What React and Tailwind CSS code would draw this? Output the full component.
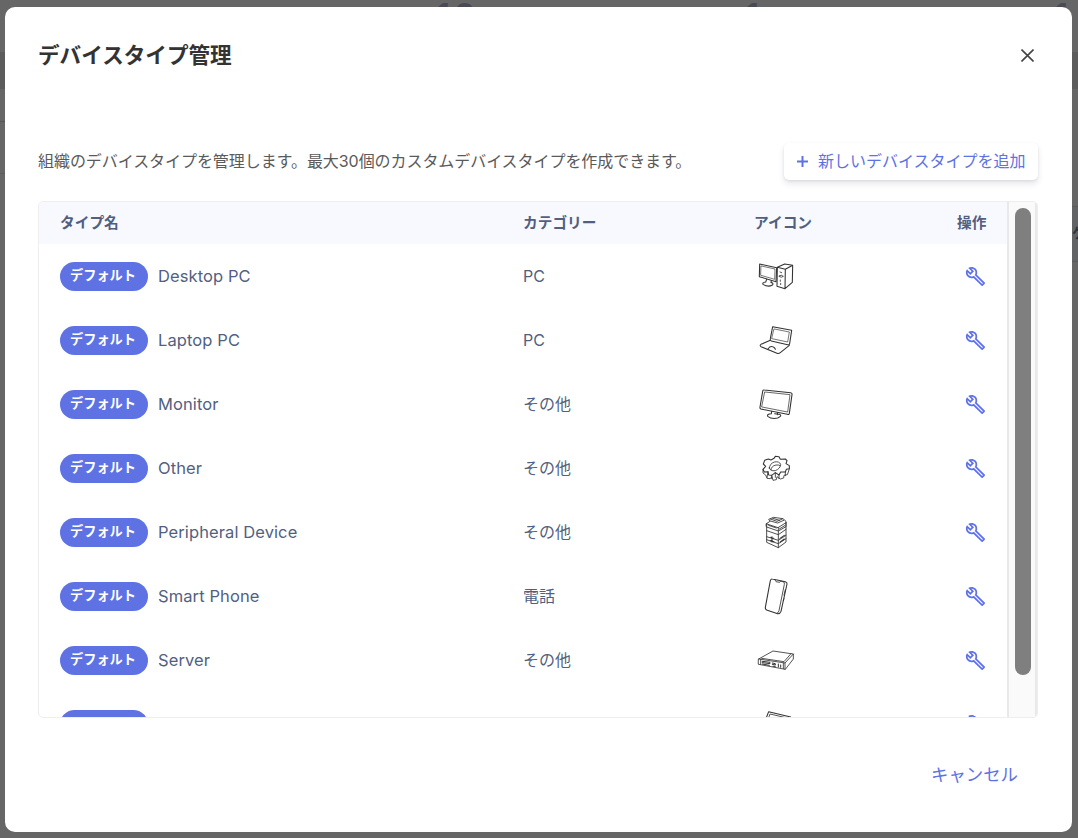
import { MdOutlineBuild } from "react-icons/md";

// -----------------------------
// ICONS
// -----------------------------
function DeviceIcon({ viewBox, children }) {
  return (
    <svg
      viewBox={viewBox}
      className="block size-10"
      fill="none"
      stroke="#333"
      strokeWidth="3.2"
      strokeLinejoin="round"
      strokeLinecap="round"
      aria-hidden
    >
      {children}
    </svg>
  );
}

const icons = {
  desktop: (
    <DeviceIcon viewBox="48 18 120 120">
      <path d="M59 42L110 53L108 95L58 80Z" />
      <path d="M64 48L105 57L104 88L63 76Z" strokeWidth="2" />
      <path d="M80 88L77 96M94 92L93 98M77 96Q66 98 69 103Q84 112 96 106Q103 101 93 97" />
      <path d="M112 52L134 42L158 46L157 97L135 116L111 109ZM112 52L136 58L135 116M136 58L158 46" />
      <path d="M118 77Q124 73 130 79Q125 84 118 80ZM120 66L125 68M121 90V94M122 100V104" strokeWidth="2.5" />
    </DeviceIcon>
  ),
  laptop: (
    <DeviceIcon viewBox="48 210 120 120">
      <path d="M98 230L155 241L149 280Q148 286 143 284L94 273Q89 271 91 266Z" />
      <path d="M103 237L148 246L143 276L96 266Z" strokeWidth="2" />
      <path d="M91 271L63 283Q58 286 63 290L111 310Q116 312 121 308L148 286" />
      <path d="M84 297L89 291Q97 287 104 294L106 298" />
    </DeviceIcon>
  ),
  monitor: (
    <DeviceIcon viewBox="48 12 120 120">
      <path d="M73 30L152 38Q157 39 156 44L148 100Q147 105 142 103L63 87Q59 86 60 81L68 34Q69 29 73 30Z" />
      <path d="M75 36L150 44L143 96L66 81Z" strokeWidth="2.2" />
      <path d="M95 94L94 101M113 98L112 104M94 101Q80 102 83 109Q95 118 113 114Q128 108 119 103L104 101" />
    </DeviceIcon>
  ),
  gear: (
    <DeviceIcon viewBox="48 204 120 120">
      <path d="M74 241L85 237L93 240L102 235L106 229L117 230L121 238L136 237L141 242L138 251L148 257L148 266L139 268L136 276L122 276L117 285L106 278L95 286L86 285L84 275L73 276L69 268L77 259L70 252Z" />
      <path d="M69 268V279L77 285L81 295L91 296L96 289L99 301L109 299L111 290L121 297L131 294L132 286L142 284L145 276L148 266M84 275L81 293M95 286V296M106 278V292M117 285V296M136 276V287" strokeWidth="2.5" />
      <path d="M88 264Q89 251 103 246Q118 243 122 253Q121 266 106 272Q90 274 88 264ZM93 269Q94 258 108 255Q118 254 121 257" strokeWidth="2.5" />
    </DeviceIcon>
  ),
  printer: (
    <DeviceIcon viewBox="48 21 120 120">
      <path d="M80 56V112L115 128L138 111V53M80 77L115 89L138 73M115 68V128M80 95L115 106L138 91M80 104L115 116L138 101" strokeWidth="2.6" />
      <path d="M79 56L90 49L86 43L101 37L129 41L138 49V65L115 78L80 66ZM81 57L114 68L138 53M91 48L113 54L131 46M91 42L111 49L127 42M98 40L119 46M86 61L109 69M118 72L134 62" strokeWidth="2.6" />
      <path d="M92 97L101 100M96 95V111M91 107L102 110M120 100L133 91M121 111L133 102" />
    </DeviceIcon>
  ),
  phone: (
    <DeviceIcon viewBox="48 213 120 120">
      <path d="M97 222L136 230Q142 232 141 237L123 319Q120 327 113 326L82 316Q75 313 76 307L91 227Q93 221 97 222Z" />
      <path d="M105 225L108 230L119 232L122 228L131 231Q134 233 133 238L117 317Q115 324 111 325" strokeWidth="2.5" />
      <path d="M136 254L132 270M132 281L130 287" strokeWidth="2.5" />
    </DeviceIcon>
  ),
  server: (
    <DeviceIcon viewBox="48 15 120 120">
      <path d="M56 72L99 48L160 57V72L136 103L56 88ZM56 72L135 84L160 57M135 84V103M62 73V88M130 84V101M65 70L132 80L153 56" strokeWidth="2.5" />
      <path d="M68 79L90 82V86L68 83ZM67 87L88 91M97 84L106 86V90L97 88M99 94H106M115 87V96M122 90V97" strokeWidth="3" />
    </DeviceIcon>
  ),
  tablet: (
    <DeviceIcon viewBox="48 207 120 120">
      <path d="M79 248L86 230L152 246L140 300L70 282Z" />
      <path d="M86 248L90 237L146 250L136 292L78 277Z" strokeWidth="2.5" />
    </DeviceIcon>
  ),
};

// -----------------------------
// DATA
// -----------------------------
const devices = [
  { name: "Desktop PC", category: "PC", icon: "desktop" },
  { name: "Laptop PC", category: "PC", icon: "laptop" },
  { name: "Monitor", category: "その他", icon: "monitor" },
  { name: "Other", category: "その他", icon: "gear" },
  { name: "Peripheral Device", category: "その他", icon: "printer" },
  { name: "Smart Phone", category: "電話", icon: "phone" },
  { name: "Server", category: "その他", icon: "server" },
];

// -----------------------------
// COMPONENTS
// -----------------------------
function DeviceRow({ device }) {
  return (
    <div className="flex h-16 shrink-0 items-center pl-[21px] text-base text-[#525f7f]">
      <div className="flex w-[463px] items-center">
        <span className="flex h-[29px] w-[88px] items-center justify-center rounded-full bg-[#5e72e4] pr-[2px] text-[13.2px] font-bold text-white">
          {device.name && "デフォルト"}
        </span>
        <span className="ml-2.5 text-[16.5px] tracking-[0.1px]">{device.name}</span>
      </div>
      <div className="w-[233px]">{device.category}</div>
      <div className="w-[209px]">{icons[device.icon]}</div>
      <button type="button" className="pt-px text-[#5e72e4]" aria-label="操作">
        <MdOutlineBuild className="size-[21px]" />
      </button>
    </div>
  );
}

// Dimmed page behind the dialog
function Backdrop() {
  return (
    <div className="absolute inset-0 overflow-hidden bg-[#666]" aria-hidden>
      <div className="mt-[52px] h-[37px] bg-[#5c5c5c]" />
      <div className="mt-8 h-px w-2 bg-[#555]" />
      <div className="mt-[51px] h-px w-2 bg-[#5c5c5c]" />
      <div className="absolute top-[206px] right-0 h-[56px] w-2 border-y border-[#5a5a5a] bg-[#626364]" />
      <div className="font-['Open_Sans',sans-serif] text-[38px] leading-[38px] font-bold text-[#484b55]">
        <span className="absolute -top-1 left-[432px]">10</span>
        <span className="absolute -top-1 left-[741px]">1</span>
        <span className="absolute -top-1 left-[1050px]">1</span>
      </div>
      <span className="absolute top-[223px] left-[1072px] text-sm font-bold text-[#30343f]">ケ</span>
    </div>
  );
}

export default function App() {
  return (
    <div className="relative h-[838px] w-[1078px] overflow-hidden pt-[7px] pl-[5px] font-['Inter','Noto_Sans_CJK_JP',sans-serif]">
      <Backdrop />

      <div role="dialog" className="relative flex h-[825px] w-[1067px] flex-col rounded-[10px] bg-white pr-[34px] pl-[33px]">
        {/* Title */}
        <header className="flex h-[96px] items-center justify-between">
          <h1 className="text-[21.6px] font-bold text-[#333]">デバイスタイプ管理</h1>
          <button type="button" className="mr-[4px] pt-px" aria-label="閉じる">
            <svg viewBox="0 0 13 13" className="block size-[13px]" stroke="#444" strokeWidth="1.6" aria-hidden>
              <path d="M0.5 0.5L12.5 12.5M12.5 0.5L0.5 12.5" />
            </svg>
          </button>
        </header>

        {/* Description and add button */}
        <div className="mt-[40px] flex h-[37px] items-center justify-between">
          <p className="pb-[2px] text-base tracking-[-0.06px] text-[#5a5a5a]">
            組織のデバイスタイプを管理します。最大30個のカスタムデバイスタイプを作成できます。
          </p>
          <button
            type="button"
            className="flex h-[37px] w-[254px] items-center rounded-[5px] bg-white pl-[13px] text-base text-[#5e72e4] shadow-[0_4px_6px_rgba(50,50,93,0.11),0_1px_3px_rgba(0,0,0,0.08)]"
          >
            <svg viewBox="0 0 11 11" className="mr-[10px] block size-[11px]" stroke="currentColor" strokeWidth="2" aria-hidden>
              <path d="M5.5 0V11M0 5.5H11" />
            </svg>
            <span className="pb-[2px] whitespace-nowrap">新しいデバイスタイプを追加</span>
          </button>
        </div>

        {/* Table */}
        <div className="mt-[21px] flex h-[517px] w-full overflow-hidden rounded-[5px] border border-[#eee]">
          <div className="flex flex-1 flex-col overflow-hidden">
            <div className="flex h-[42px] shrink-0 items-center bg-[#f8f9fe] pt-px pl-[21px] text-[14.7px] font-bold text-[#525f7f]">
              <div className="w-[463px]">タイプ名</div>
              <div className="w-[231px]">カテゴリー</div>
              <div className="w-[203px]">アイコン</div>
              <div>操作</div>
            </div>
            {devices.map((d) => (
              <DeviceRow key={d.name} device={d} />
            ))}
            <DeviceRow device={{ icon: "tablet" }} />
          </div>
          <div className="w-[30px] border-x-2 border-[#e9e9e9] bg-[#fafafa] pt-[6px] pl-[6px]">
            <div className="h-[467px] w-4 rounded-full bg-[#7f7f7f]" />
          </div>
        </div>

        {/* Footer */}
        <footer className="flex h-[114px] items-center justify-end pr-[20px]">
          <button type="button" className="text-[17.4px] text-[#5e72e4]">
            キャンセル
          </button>
        </footer>
      </div>
    </div>
  );
}
